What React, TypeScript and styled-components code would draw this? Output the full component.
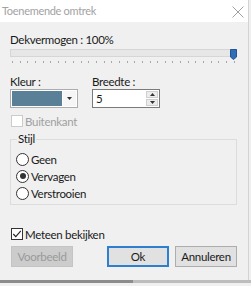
import React from "react";
import styled, { createGlobalStyle } from "styled-components";

const GlobalStyle = createGlobalStyle`
  html, body {
    margin: 0;
    padding: 0;
    background: #f0f0f0;
  }
  body {
    font-family: Lato, "Noto Sans", sans-serif;
    font-size: 11px;
    letter-spacing: -0.3px;
    color: #1a1a1a;
  }
`;

const TICKS = Array.from({ length: 30 });

const App: React.FC = () => {
  return (
    <>
      <GlobalStyle />
      <Window>
        <Dialog>
          <TitleBar>
            <Title>Toenemende omtrek</Title>
            <CloseIcon width="12" height="12" viewBox="0 0 12 12">
              <path d="M0.5 0.5 L11.5 11.5 M11.5 0.5 L0.5 11.5" stroke="#a0a0a0" strokeWidth="1" />
            </CloseIcon>
          </TitleBar>

          <Content>
            <Label>Dekvermogen : 100%</Label>
            <Slider>
              <Track />
              <Thumb width="7" height="11" viewBox="0 0 7 11">
                <path d="M0.5 0.5 H6.5 V8 L3.5 10.5 L0.5 8 Z" fill="#2f6db5" stroke="#1f5596" strokeWidth="1" />
              </Thumb>
              <Ticks>
                {TICKS.map((_, i) => (
                  <Tick key={i} />
                ))}
              </Ticks>
            </Slider>

            <FieldRow>
              <Field>
                <FieldLabel>Kleur :</FieldLabel>
                <ColorCombo>
                  <Swatch />
                  <DropButton>
                    <svg width="5" height="3" viewBox="0 0 5 3">
                      <path d="M0 0 H5 L2.5 3 Z" fill="#333" />
                    </svg>
                  </DropButton>
                </ColorCombo>
              </Field>
              <Field>
                <FieldLabel>Breedte :</FieldLabel>
                <SpinBox>
                  <SpinValue>5</SpinValue>
                  <SpinButtons>
                    <SpinButton>
                      <svg width="5" height="3" viewBox="0 0 5 3">
                        <path d="M0 3 H5 L2.5 0 Z" fill="#333" />
                      </svg>
                    </SpinButton>
                    <SpinButton>
                      <svg width="5" height="3" viewBox="0 0 5 3">
                        <path d="M0 0 H5 L2.5 3 Z" fill="#333" />
                      </svg>
                    </SpinButton>
                  </SpinButtons>
                </SpinBox>
              </Field>
            </FieldRow>

            <CheckRow $disabled $gap={6}>
              <CheckBox $disabled />
              <span>Buitenkant</span>
            </CheckRow>

            <GroupBox>
              <Legend>Stijl</Legend>
              <RadioRow>
                <Radio />
                <span>Geen</span>
              </RadioRow>
              <RadioRow>
                <Radio $checked />
                <span>Vervagen</span>
              </RadioRow>
              <RadioRow>
                <Radio />
                <span>Verstrooien</span>
              </RadioRow>
            </GroupBox>

            <CheckRow $gap={22}>
              <CheckBox>
                <svg width="10" height="10" viewBox="0 0 10 10">
                  <path d="M1.3 5 L3.8 7.6 L8.8 1.8" fill="none" stroke="#222" strokeWidth="1.1" />
                </svg>
              </CheckBox>
              <span>Meteen bekijken</span>
            </CheckRow>

            <ButtonRow>
              <Button $disabled>Voorbeeld</Button>
              <RightButtons>
                <Button $default>Ok</Button>
                <Button>Annuleren</Button>
              </RightButtons>
            </ButtonRow>
          </Content>
        </Dialog>
        <BottomEdge>
          <EdgeDark />
          <EdgeLight />
        </BottomEdge>
      </Window>
    </>
  );
};

export default App;

const Window = styled.div`
  width: 251px;
  height: 286px;
  display: flex;
  flex-direction: column;
  overflow: hidden;
`;

const Dialog = styled.div`
  width: 248px;
  height: 280px;
  flex-shrink: 0;
  display: flex;
  flex-direction: column;
  background: #f0f0f0;
  border-right: 1px solid #d4d4d4;
`;

const TitleBar = styled.div`
  height: 22px;
  flex-shrink: 0;
  background: #ffffff;
  display: flex;
  align-items: center;
  justify-content: space-between;
  padding: 0 4px 0 2px;
`;

const Title = styled.span`
  color: #a2a2a2;
  font-size: 11px;
  margin-top: -2px;
`;

const CloseIcon = styled.svg`
  margin-top: 2px;
`;

const Content = styled.div`
  display: flex;
  flex-direction: column;
  padding: 10px 10px 0 10px;
`;

const Label = styled.div`
  font-size: 11.5px;
  line-height: 15px;
  color: #1a1a1a;
`;

const Slider = styled.div`
  position: relative;
  width: 227px;
  padding-top: 2px;
`;

const Track = styled.div`
  height: 6px;
  background: #e7e7e7;
  border: 1px solid #d6d6d6;
`;

const Thumb = styled.svg`
  position: absolute;
  left: 220px;
  top: 2px;
`;

const Ticks = styled.div`
  display: flex;
  justify-content: space-between;
  margin: 4px 2px 0 2px;
`;

const Tick = styled.div`
  width: 1px;
  height: 2px;
  background: #a8a8a8;
`;

const FieldRow = styled.div`
  display: flex;
  gap: 14px;
  margin-top: 12px;
`;

const Field = styled.div`
  display: flex;
  flex-direction: column;
  gap: 1px;
`;

const FieldLabel = styled.div`
  font-size: 11.5px;
  line-height: 13px;
`;

const ColorCombo = styled.div`
  width: 68px;
  height: 19px;
  box-sizing: border-box;
  border: 1px solid #adadad;
  background: #ffffff;
  display: flex;
  padding: 1px;
  gap: 1px;
`;

const Swatch = styled.div`
  flex: 1;
  background: #5a8098;
`;

const DropButton = styled.div`
  width: 13px;
  display: flex;
  align-items: center;
  justify-content: center;
  background: #f6f6f6;
`;

const SpinBox = styled.div`
  width: 68px;
  height: 19px;
  box-sizing: border-box;
  border: 1px solid #7a7a7a;
  background: #ffffff;
  display: flex;
  align-items: center;
  padding: 1px;
`;

const SpinValue = styled.span`
  flex: 1;
  padding-left: 2px;
  font-size: 11.5px;
`;

const SpinButtons = styled.div`
  width: 12px;
  height: 100%;
  display: flex;
  flex-direction: column;
  gap: 1px;
`;

const SpinButton = styled.div`
  flex: 1;
  display: flex;
  align-items: center;
  justify-content: center;
  background: #ececec;
  border: 1px solid #cfcfcf;
`;

const CheckRow = styled.div<{ $disabled?: boolean; $gap: number }>`
  display: flex;
  align-items: center;
  gap: 2px;
  height: 14px;
  margin-top: ${(p) => p.$gap}px;
  margin-left: 1px;
  color: ${(p) => (p.$disabled ? "#a0a0a0" : "#1a1a1a")};
  font-size: 11.5px;
`;

const CheckBox = styled.div<{ $disabled?: boolean }>`
  width: 10px;
  height: 10px;
  border: 1px solid ${(p) => (p.$disabled ? "#cccccc" : "#333333")};
  background: #ffffff;
  display: flex;
  align-items: center;
  justify-content: center;
`;

const GroupBox = styled.fieldset`
  margin: 4px 0 0 0;
  width: 227px;
  height: 73px;
  box-sizing: border-box;
  border: 1px solid #dcdcdc;
  padding: 6px 0 0 5px;
  display: flex;
  flex-direction: column;
  gap: 3px;
`;

const Legend = styled.legend`
  padding: 0 1px;
  margin-left: 1px;
  font-size: 11.5px;
  line-height: 14px;
`;

const RadioRow = styled.div`
  display: flex;
  align-items: center;
  gap: 2px;
  height: 14px;
  font-size: 11.5px;
`;

const Radio = styled.div<{ $checked?: boolean }>`
  width: 11px;
  height: 11px;
  border-radius: 50%;
  border: 1px solid #333333;
  background: #ffffff;
  display: flex;
  align-items: center;
  justify-content: center;
  &::after {
    content: "";
    display: ${(p) => (p.$checked ? "block" : "none")};
    width: 6px;
    height: 6px;
    border-radius: 50%;
    background: #333333;
  }
`;

const ButtonRow = styled.div`
  display: flex;
  justify-content: space-between;
  margin-top: 5px;
  margin-left: 1px;
  width: 226px;
`;

const RightButtons = styled.div`
  display: flex;
  gap: 6px;
`;

const Button = styled.div<{ $disabled?: boolean; $default?: boolean }>`
  width: 62px;
  height: 21px;
  box-sizing: border-box;
  display: flex;
  align-items: center;
  justify-content: center;
  font-size: 11.5px;
  background: ${(p) => (p.$disabled ? "#cccccc" : "#e1e1e1")};
  color: ${(p) => (p.$disabled ? "#9a9a9a" : "#1a1a1a")};
  border: ${(p) =>
    p.$default ? "2px solid #2f7fd0" : p.$disabled ? "1px solid #c4c4c4" : "1px solid #adadad"};
`;

const BottomEdge = styled.div`
  display: flex;
  height: 3px;
  flex-shrink: 0;
`;

const EdgeDark = styled.div`
  width: 133px;
  background: #8c8c8c;
`;

const EdgeLight = styled.div`
  flex: 1;
  background: #bdbdbd;
`;
